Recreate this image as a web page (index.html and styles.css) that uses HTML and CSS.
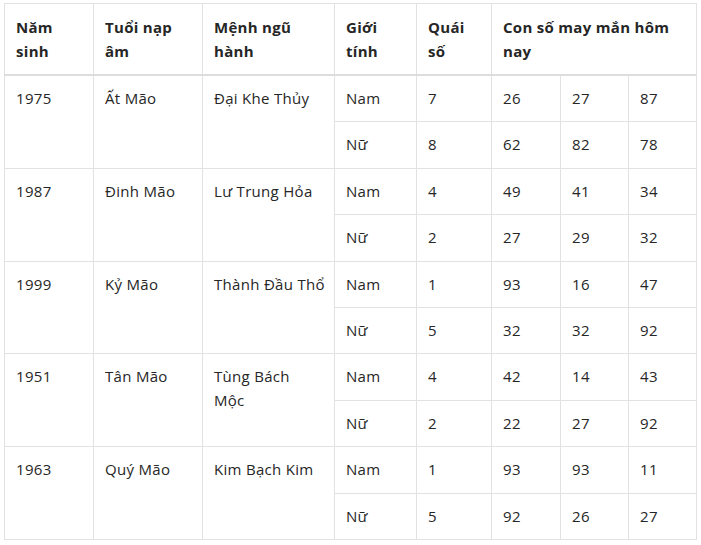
FILE: index.html
```html
<!DOCTYPE html>
<html lang="vi">
<head>
<meta charset="utf-8">
<link rel="stylesheet" href="styles.css">
</head>
<body>
<table class="luck">
  <colgroup>
    <col class="c1"><col class="c2"><col class="c3"><col class="c4"><col class="c5"><col class="c6"><col class="c7"><col class="c8">
  </colgroup>
  <thead>
    <tr>
      <th>Năm sinh</th>
      <th>Tuổi nạp âm</th>
      <th>Mệnh ngũ hành</th>
      <th>Giới tính</th>
      <th>Quái số</th>
      <th colspan="3">Con số may mắn hôm nay</th>
    </tr>
  </thead>
  <tbody>
    <tr><td rowspan="2">1975</td><td rowspan="2">Ất Mão</td><td rowspan="2">Đại Khe Thủy</td><td>Nam</td><td>7</td><td>26</td><td>27</td><td>87</td></tr>
    <tr><td>Nữ</td><td>8</td><td>62</td><td>82</td><td>78</td></tr>
    <tr><td rowspan="2">1987</td><td rowspan="2">Đinh Mão</td><td rowspan="2">Lư Trung Hỏa</td><td>Nam</td><td>4</td><td>49</td><td>41</td><td>34</td></tr>
    <tr><td>Nữ</td><td>2</td><td>27</td><td>29</td><td>32</td></tr>
    <tr><td rowspan="2">1999</td><td rowspan="2">Kỷ Mão</td><td rowspan="2" class="nowrap">Thành Đầu Thổ</td><td>Nam</td><td>1</td><td>93</td><td>16</td><td>47</td></tr>
    <tr><td>Nữ</td><td>5</td><td>32</td><td>32</td><td>92</td></tr>
    <tr><td rowspan="2">1951</td><td rowspan="2">Tân Mão</td><td rowspan="2">Tùng Bách Mộc</td><td>Nam</td><td>4</td><td>42</td><td>14</td><td>43</td></tr>
    <tr><td>Nữ</td><td>2</td><td>22</td><td>27</td><td>92</td></tr>
    <tr><td rowspan="2">1963</td><td rowspan="2">Quý Mão</td><td rowspan="2">Kim Bạch Kim</td><td>Nam</td><td>1</td><td>93</td><td>93</td><td>11</td></tr>
    <tr><td>Nữ</td><td>5</td><td>92</td><td>26</td><td>27</td></tr>
  </tbody>
</table>
</body>
</html>
```
FILE: styles.css
```css
html, body {
  background: #ffffff;
}
body {
  margin: 3px 0 0 4px;
  font-family: "Open Sans", "Noto Sans", sans-serif;
  font-size: 15px;
  letter-spacing: 0.3px;
  color: #262626;
}
.luck {
  border-collapse: collapse;
  table-layout: fixed;
  width: 693px;
}
.c1 { width: 89px; }
.c2 { width: 109px; }
.c3 { width: 132px; }
.c4 { width: 82px; }
.c5 { width: 75px; }
.c6 { width: 69px; }
.c7 { width: 68px; }
.c8 { width: 68px; }
.luck th,
.luck td {
  border: 1px solid #e2e2e2;
  padding: 11px 12px 11px 11px;
  line-height: 23.4px;
  text-align: left;
  vertical-align: top;
  font-weight: 400;
}
.luck th {
  font-weight: 700;
  border-bottom: 2px solid #dddddd;
  line-height: 24px;
}
.luck .nowrap {
  white-space: nowrap;
}
```
